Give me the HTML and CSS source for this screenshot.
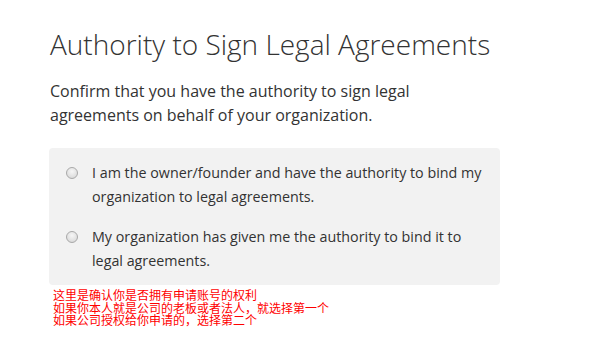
FILE: index.html
```html
<!DOCTYPE html>
<html lang="en">
<head>
<meta charset="utf-8">
<title>Authority to Sign Legal Agreements</title>
<link rel="stylesheet" href="styles.css">
</head>
<body>
<main class="page">
  <h1 class="title">Authority to Sign Legal Agreements</h1>
  <p class="lead">Confirm that you have the authority to sign legal<br>agreements on behalf of your organization.</p>
  <div class="panel">
    <label class="option">
      <span class="radio"></span>
      <span class="option-text">I am the owner/founder and have the authority to bind my organization to legal agreements.</span>
    </label>
    <label class="option">
      <span class="radio"></span>
      <span class="option-text">My organization has given me the authority to bind it to legal agreements.</span>
    </label>
  </div>
  <div class="note">
    <div>这里是确认你是否拥有申请账号的权利</div>
    <div>如果你本人就是公司的老板或者法人，就选择第一个</div>
    <div>如果公司授权给你申请的，选择第二个</div>
  </div>
</main>
</body>
</html>
```

FILE: styles.css
```css
html, body {
  margin: 0;
  padding: 0;
  background: #ffffff;
}

.page {
  padding: 24px 0 0 50px;
  width: 450px;
  color: #333333;
}

.title {
  margin: 0;
  font-family: "Open Sans", sans-serif;
  font-weight: 300;
  font-size: 28px;
  line-height: 40px;
  color: #333333;
  white-space: nowrap;
}

.lead {
  margin: 15px 0 0 0;
  font-family: "Open Sans", sans-serif;
  font-weight: 400;
  font-size: 16px;
  line-height: 24px;
  color: #333333;
  white-space: nowrap;
}

.panel {
  margin: 21px 0 0 -1px;
  background: #f2f2f2;
  border-radius: 4px;
  padding: 13px 10px 12px 17px;
  display: flex;
  flex-direction: column;
  gap: 16px;
}

.option {
  display: flex;
  align-items: flex-start;
  gap: 14px;
  font-family: "Open Sans", sans-serif;
  font-size: 14.3px;
  line-height: 24px;
  color: #333333;
}

.radio {
  flex: none;
  width: 12px;
  height: 12px;
  margin-top: 6px;
  border-radius: 50%;
  box-sizing: border-box;
  border: 1px solid #a9a9a9;
  background: radial-gradient(circle at 50% 35%, #f6f6f6 0%, #e0e0e0 65%, #cfcfcf 100%);
}

.option-text {
  flex: 1;
}

.note {
  margin: 4px 0 0 3px;
  font-family: "Noto Sans CJK SC", sans-serif;
  font-size: 12px;
  line-height: 12.5px;
  color: #ff0000;
  white-space: nowrap;
}
```
